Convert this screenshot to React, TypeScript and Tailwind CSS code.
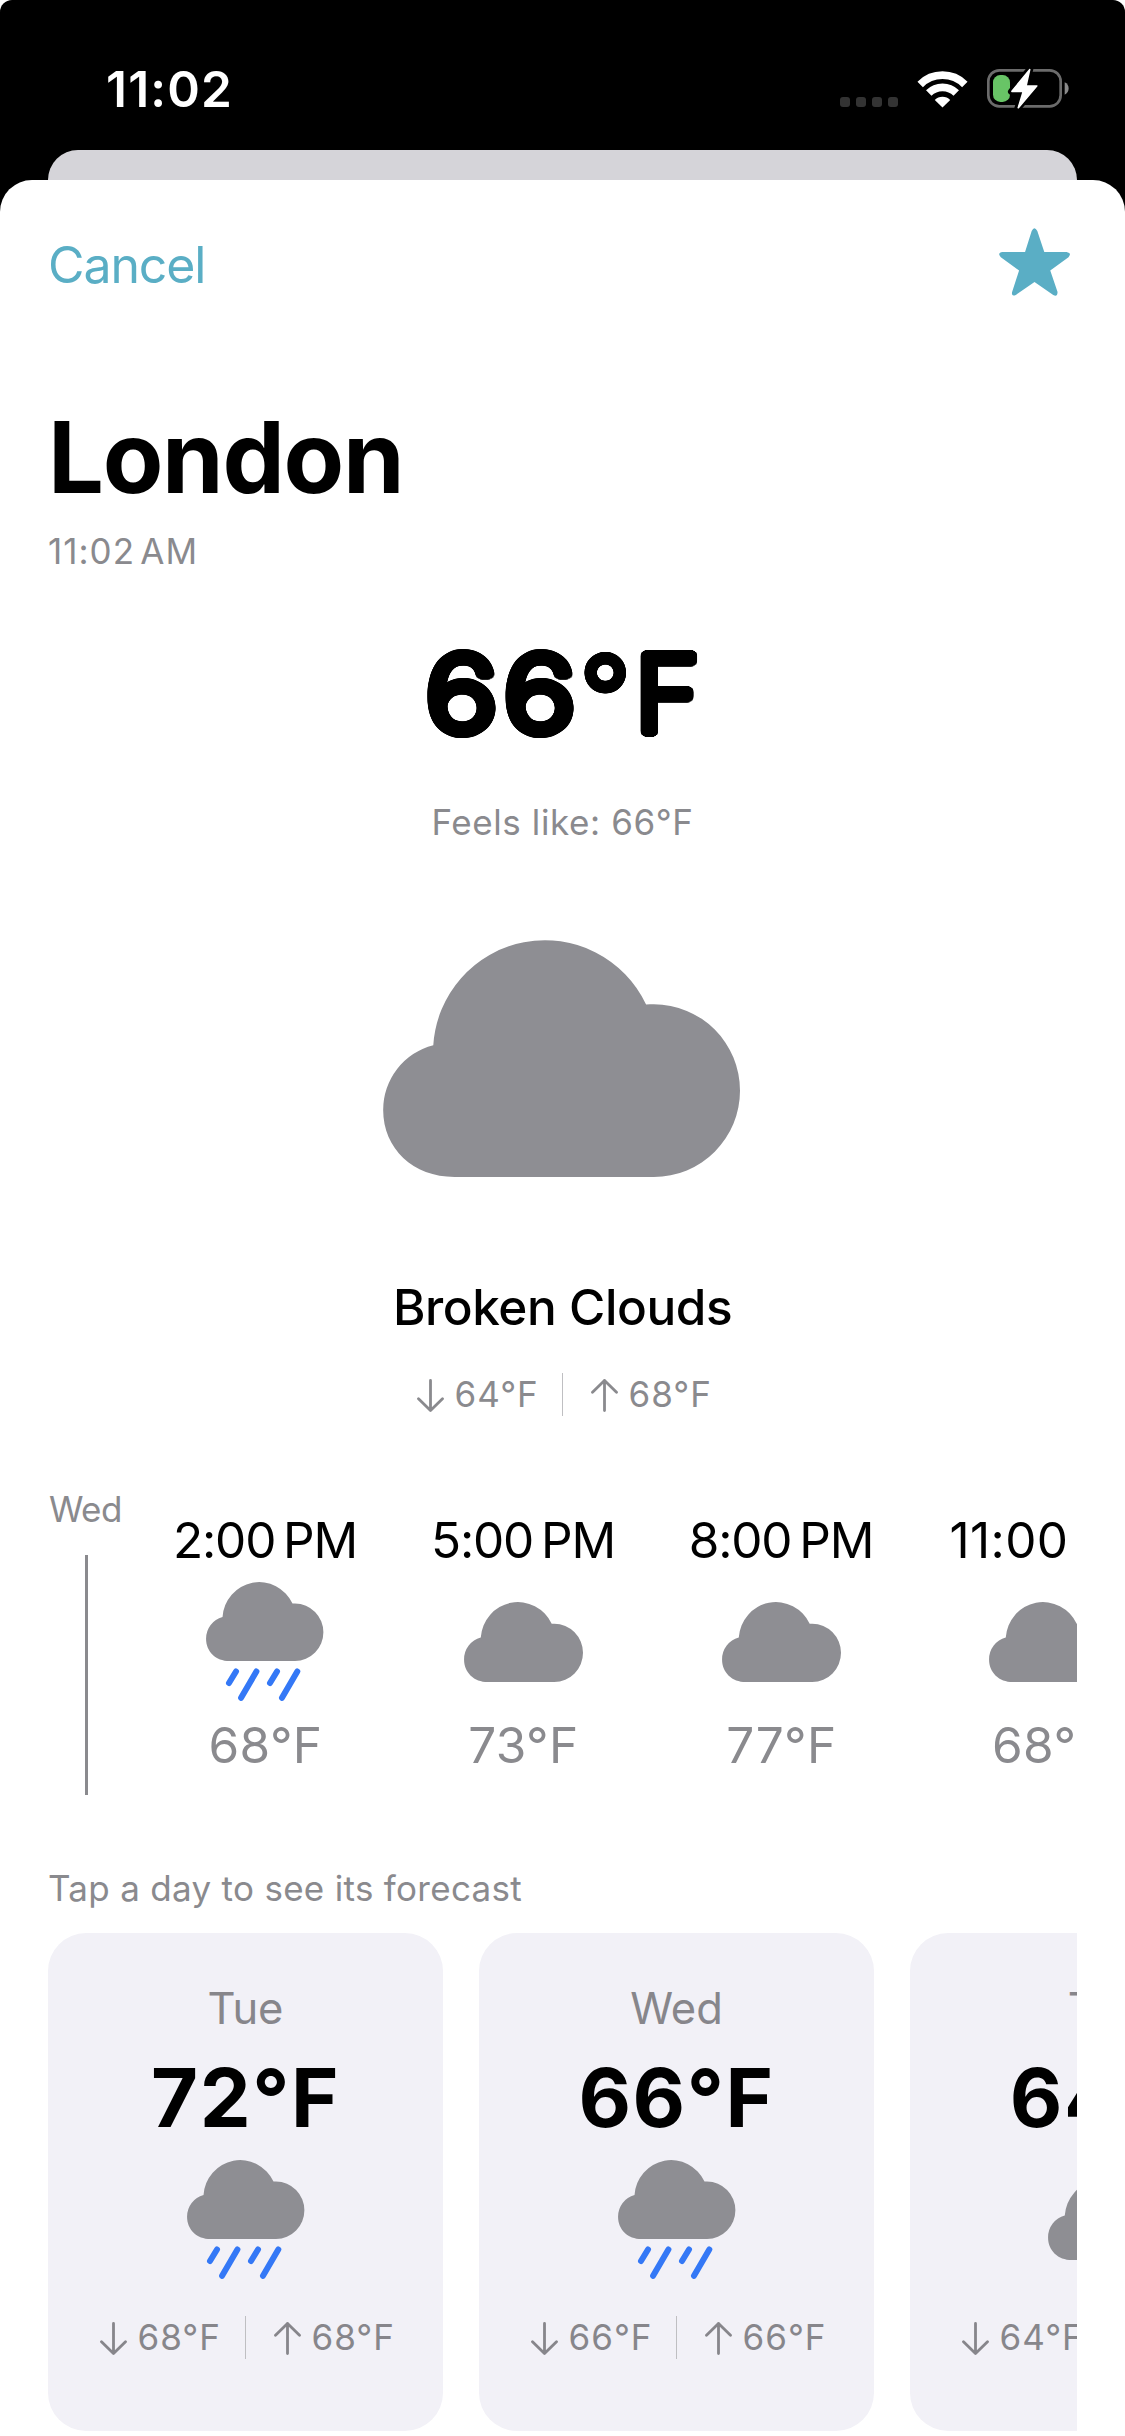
import type { ReactNode } from "react";

const CLOUD_PATH =
  "M151 315A336 336 0 0 1 790 193C798 192.800 806 192.700 813.300 192.700A258.700 258.700 0 0 1 1072 451.300A258.700 258.700 0 0 1 813.300 710H215C90 710 0.500 625 0.500 509.500A200.500 200.500 0 0 1 151 315Z";

/* A ring of equal shadows thickens the strokes and rounds their ends. */
const roundShadow = (radius: number) =>
  Array.from({ length: 32 }, (_, i) => {
    const a = (i / 32) * Math.PI * 2;
    return `${(Math.cos(a) * radius).toFixed(2)}px ${(Math.sin(a) * radius).toFixed(2)}px 0 #000`;
  }).join(", ");

function Cloud({ className }: { className: string }) {
  return (
    <svg viewBox="0 0 1072 710" preserveAspectRatio="none" className={className} fill="#8e8e93">
      <path d={CLOUD_PATH} />
    </svg>
  );
}

function RainCloud() {
  return (
    <svg viewBox="0 0 118 119" className="h-[119px] w-[118px]">
      <path d={CLOUD_PATH} fill="#8e8e93" transform="scale(0.1095 0.1113)" />
      <g stroke="#3478f6" strokeWidth="6" strokeLinecap="round">
        <path d="M30 89.500L23 101M50.400 89.500L35.100 115.800M71 89.500L64 101M91.300 89.500L76 115.800" />
      </g>
    </svg>
  );
}

type Sky = "rain" | "cloud";

function SkyIcon({ sky }: { sky: Sky }) {
  return (
    <div className="flex h-[119px] shrink-0 items-center justify-center">
      {sky === "rain" ? <RainCloud /> : <Cloud className="h-[80px] w-[119px]" />}
    </div>
  );
}

function Arrow({ up = false }: { up?: boolean }) {
  return (
    <svg viewBox="0 0 27 33" className="mt-0.5 h-[33px] w-[27px] shrink-0" fill="none" stroke="currentColor" strokeWidth="2.8" strokeLinecap="round" strokeLinejoin="round">
      <path d={up ? "M13.500 31.500V1.500M1.500 13.300L13.500 1.500L25.500 13.300" : "M13.500 1.500V31.500M1.500 19.700L13.500 31.500L25.500 19.700"} />
    </svg>
  );
}

function Small({ children }: { children: ReactNode }) {
  return <span className="text-[35px] leading-none tracking-[1px]">{children}</span>;
}

function LowHigh({ low, high }: { low: string; high: string }) {
  return (
    <div className="ml-[2px] flex h-[43px] shrink-0 items-center whitespace-nowrap">
      <Arrow />
      <div className="ml-[11px] flex w-[83px]">
        <Small>{low}</Small>
      </div>
      <div className="ml-[24px] h-full w-px bg-[#bfbfc2]" />
      <div className="ml-[28px] flex items-center">
        <Arrow up />
        <div className="ml-[11px] flex w-[82px]">
          <Small>{high}</Small>
        </div>
      </div>
    </div>
  );
}

function WifiIcon() {
  return (
    <svg viewBox="352 119 152 113" className="mb-px ml-[19px] h-[38px] w-[51px]" fill="none" stroke="#fff" strokeWidth="23">
      <path d="M361.500 162A94 94 0 0 1 494.500 162" />
      <path d="M387 187.500A58 58 0 0 1 469 187.500" />
      <path d="M428 231L405 208A33 33 0 0 1 451 208Z" fill="#fff" stroke="none" />
    </svg>
  );
}

function BatteryIcon() {
  return (
    <svg viewBox="22 24 246 123" className="ml-[19px] h-[41px] w-[82px]">
      <rect x="26" y="31" width="217" height="108" rx="33" fill="none" stroke="#6b6b6b" strokeWidth="8" />
      <path d="M255 67C271 74 271 97 255 104Z" fill="#8a8a8a" />
      <rect x="40" y="45" width="51" height="81" rx="22" fill="#68c466" />
      <path
        d="M151 27L95 95H131L114 145L172 78H138Z"
        fill="#fff"
        stroke="#000"
        strokeWidth="20"
        strokeLinejoin="round"
        paintOrder="stroke"
      />
      <path d="M150 29L97 94H131L116 143L171 78H139Z" fill="#fff" stroke="#fff" strokeWidth="5" strokeLinejoin="round" />
    </svg>
  );
}

function StatusBar() {
  return (
    <div className="flex h-[150px] items-start justify-between pr-[56px] pl-[106px]">
      <div className="mt-[64.500px] text-[49.500px] leading-none font-semibold tracking-[1.200px] text-white">11:02</div>
      <div className="mt-[68px] flex h-[41px] items-end">
        <div className="mb-[2px] flex gap-1.5">
          {[0, 1, 2, 3].map((i) => (
            <div key={i} className="size-2.5 rounded-[3px] bg-[#333]" />
          ))}
        </div>
        <WifiIcon />
        <BatteryIcon />
      </div>
    </div>
  );
}

const hours: { time: string; sky: Sky; temp: string; wide?: boolean }[] = [
  { time: "2:00\u202fPM", sky: "rain", temp: "68°F" },
  { time: "5:00\u202fPM", sky: "cloud", temp: "73°F" },
  { time: "8:00\u202fPM", sky: "cloud", temp: "77°F" },
  { time: "11:00\u202fPM", sky: "cloud", temp: "68°F", wide: true },
];

const days: { day: string; temp: string; sky: Sky; low: string; high: string }[] = [
  { day: "Tue", temp: "72°F", sky: "rain", low: "68°F", high: "68°F" },
  { day: "Wed", temp: "66°F", sky: "rain", low: "66°F", high: "66°F" },
  { day: "Thu", temp: "64°F", sky: "cloud", low: "64°F", high: "64°F" },
];

export default function App() {
  return (
    <div className="bg-white">
      <div className="h-[2436px] w-[1125px] overflow-hidden rounded-t-[12px] bg-black font-['Inter','Liberation_Sans',sans-serif]">
        <StatusBar />
        <div className="mx-12 h-[30px] rounded-t-[30px] bg-[#d5d4d9]" />
        <main className="flex h-[2256px] flex-col rounded-t-[32px] bg-white px-12 pt-12 text-[#8a8a8e]">
          <div className="flex h-[68px] shrink-0 items-start justify-between">
            <button className="mt-[12px] text-[50px] leading-none tracking-[-1.100px] text-[#5aaec5]">Cancel</button>
            <svg viewBox="597 593 213 205" className="mr-[7px] h-[68px] w-[71px]" fill="#5aaec5">
              <path d="M675 665L695 602Q703 586 712 602L733 665H800Q817 668 806 681L751 721L773 786Q773 802 760 795L703.500 756L647 795Q633 801 636 786L657 721L602 681Q590 668 607 665Z" />
            </svg>
          </div>

          <h1 className="mt-[112px] shrink-0 text-[99px] leading-none font-bold tracking-[-1.290px] text-black">London</h1>
          <p className="mt-[27px] shrink-0 text-[35px] leading-none tracking-[1px]">
            11:02<span className="tracking-[-1px]">{"\u202f"}</span>AM
          </p>

          <div className="flex shrink-0 flex-col items-center">
            <div className="mt-[69px] flex h-[106px] items-baseline self-start pl-[377px] text-[106px] leading-[106px] font-light text-black">
              <span className="origin-left scale-x-[1.145] tracking-[4.400px]" style={{ textShadow: roundShadow(4.6) }}>
                66
              </span>
              <span className="ml-[18.500px] translate-y-[5px] text-[112px] leading-[106px]" style={{ textShadow: roundShadow(3) }}>
                °
              </span>
              <span className="ml-[4.500px] origin-left scale-x-[1.040]" style={{ textShadow: roundShadow(4.6) }}>
                F
              </span>
            </div>
            <p className="mt-[61px] text-[35px] leading-none tracking-[0.600px]">Feels like: 66°F</p>
            <Cloud className="mt-[100px] mr-[2px] h-[237px] w-[357px]" />
            <p className="mt-[106px] mb-[40.500px] text-[49.500px] leading-none font-medium tracking-[-0.440px] text-black">Broken Clouds</p>
            <LowHigh low="64°F" high="68°F" />
          </div>

          <div className="mt-[76px] flex shrink-0 overflow-hidden whitespace-nowrap">
            <div className="flex w-[77px] shrink-0 flex-col items-center">
              <div className="self-start pl-px text-[35px] leading-none tracking-[-0.600px]">Wed</div>
              <div className="mt-[28px] h-[240px] w-[3px] bg-[#8a8a8e]" />
            </div>
            <div className="mt-[24px] ml-[50.500px] flex gap-[79px]">
              {hours.map((h) => (
                <div key={h.time} className={`flex shrink-0 flex-col items-center ${h.wide ? "w-[198px]" : "w-[179px]"}`}>
                  <div className={`mb-[16.500px] text-[49.500px] leading-none text-black ${h.wide ? "self-start tracking-[0.400px]" : "tracking-[-1.150px]"}`}>{h.time}</div>
                  <SkyIcon sky={h.sky} />
                  <div className="mt-[20px] ml-px text-[49.500px] leading-none tracking-[0.400px]">{h.temp}</div>
                </div>
              ))}
            </div>
          </div>

          <p className="mt-[76px] shrink-0 text-[35px] leading-none tracking-[0.300px]">Tap a day to see its forecast</p>

          <div className="mt-[27px] flex shrink-0 gap-9 overflow-hidden whitespace-nowrap">
            {days.map((d) => (
              <section key={d.day} className="flex h-[498px] w-[395px] shrink-0 flex-col items-center rounded-[38px] bg-[#f2f1f7] pt-[54px] text-[#87868b]">
                <div className="text-[43.500px] leading-none">{d.day}</div>
                <div className="mt-[27px] mb-[21.500px] text-[81px] leading-none font-bold tracking-[1.500px] text-black">{d.temp}</div>
                <SkyIcon sky={d.sky} />
                <div className="mt-[37px]">
                  <LowHigh low={d.low} high={d.high} />
                </div>
              </section>
            ))}
          </div>
        </main>
      </div>
    </div>
  );
}
